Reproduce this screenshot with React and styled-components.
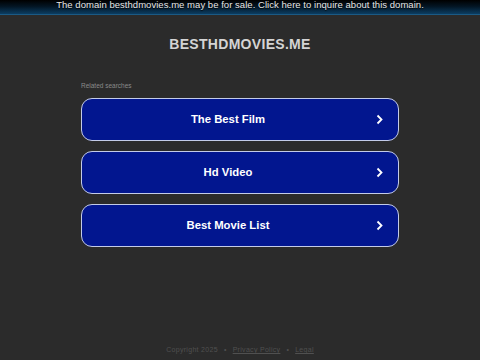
import React from 'react';
import styled, { createGlobalStyle } from 'styled-components';

const GlobalStyle = createGlobalStyle`
  html, body {
    margin: 0;
    padding: 0;
    background: #2b2b2b;
    font-family: "Liberation Sans", Arial, sans-serif;
  }
`;

const Page = styled.div`
  width: 480px;
  height: 360px;
  display: flex;
  flex-direction: column;
  align-items: center;
  background: #2b2b2b;
  overflow: hidden;
`;

const TopBar = styled.div`
  width: 100%;
  height: 14px;
  background: linear-gradient(to bottom, #000000 0%, #031523 45%, #0b3d62 100%);
  border-bottom: 1px solid #1a5a85;
  color: #e6e6e6;
  font-size: 9.5px;
  letter-spacing: 0.04px;
  text-align: center;
  line-height: 10px;
  text-shadow: 0 1px 1px #000;
`;

const Title = styled.h1`
  margin: 21px 0 0;
  font-size: 14px;
  font-weight: bold;
  letter-spacing: 0.3px;
  color: #d4d4d4;
  line-height: 16px;
`;

const Related = styled.div`
  width: 318px;
  margin-top: 30px;
  display: flex;
  flex-direction: column;
  gap: 10.5px;
`;

const Label = styled.div`
  font-size: 6.5px;
  color: #8a8a8a;
  margin-bottom: -2.5px;
  line-height: 8px;
`;

const Link = styled.a`
  display: flex;
  align-items: center;
  height: 40.5px;
  padding: 0 15px 0 0;
  border: 1.5px solid #c3cbe8;
  border-radius: 11px;
  background: #02168f;
  color: #ffffff;
  font-size: 11.3px;
  font-weight: bold;
  text-decoration: none;
`;

const LinkText = styled.span`
  flex: 1;
  text-align: center;
`;

const Chevron = styled.svg`
  flex: none;
  margin-left: 2px;
`;

const Footer = styled.div`
  margin-top: auto;
  margin-bottom: 7px;
  font-size: 7px;
  color: #505050;
  letter-spacing: 0.3px;

  a {
    color: #505050;
    text-decoration: underline;
  }

  span {
    margin: 0 6px;
  }
`;

const items = ['The Best Film', 'Hd Video', 'Best Movie List'];

export default function App() {
  return (
    <>
      <GlobalStyle />
      <Page>
        <TopBar>The domain besthdmovies.me may be for sale. Click here to inquire about this domain.</TopBar>
        <Title>BESTHDMOVIES.ME</Title>
        <Related>
          <Label>Related searches</Label>
          {items.map((t) => (
            <Link key={t} href="#">
              <LinkText>{t}</LinkText>
              <Chevron width="7" height="11" viewBox="0 0 7 11">
                <path d="M1.5 1.5 L5.5 5.5 L1.5 9.5" fill="none" stroke="#fff" strokeWidth="1.8" />
              </Chevron>
            </Link>
          ))}
        </Related>
        <Footer>
          Copyright 2025<span>•</span><a href="#">Privacy Policy</a><span>•</span><a href="#">Legal</a>
        </Footer>
      </Page>
    </>
  );
}
